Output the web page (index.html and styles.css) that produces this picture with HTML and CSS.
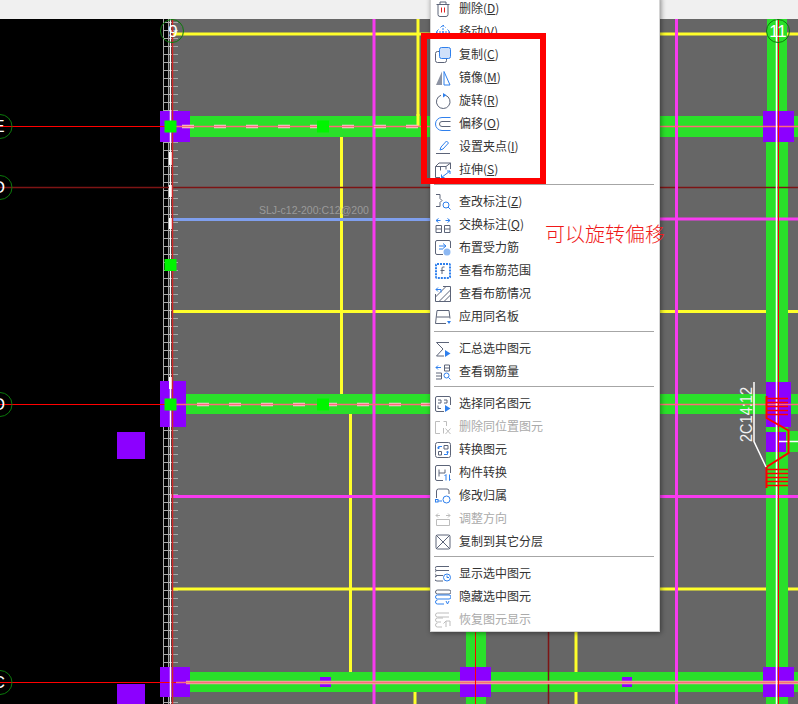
FILE: index.html
```html
<!DOCTYPE html>
<html lang="en">
<head>
    <meta charset="UTF-8">
    <meta name="viewport" content="width=device-width, initial-scale=1.0">
    <title>CAD</title>
    <link rel="stylesheet" href="styles.css">
</head>
<body>
<div class="page">
    <div class="topbar"></div>

    <!-- drawing area, coordinates are page pixels -->
    <svg class="cad" viewBox="0 19 798 685" width="798" height="685">
        <rect class="bg-gray" x="172" y="19" width="626" height="685"/>

        <!-- ruler -->
        <line class="tick" x1="170.5" y1="22" x2="170.5" y2="704"/>
        <line class="ruler" x1="163.5" y1="19" x2="163.5" y2="704"/>
        <line class="ruler" x1="168.5" y1="19" x2="168.5" y2="704"/>

        <!-- yellow -->
        <line class="yellow" x1="172" y1="34" x2="798" y2="34"/>
        <line class="yellow" x1="172" y1="311.5" x2="798" y2="311.5"/>
        <line class="yellow" x1="172" y1="589" x2="798" y2="589"/>
        <line class="yellow" x1="418" y1="19" x2="418" y2="120"/>
        <line class="yellow" x1="341.5" y1="128" x2="341.5" y2="404"/>
        <line class="yellow" x1="350.5" y1="405" x2="350.5" y2="681"/>
        <line class="yellow" x1="415" y1="684" x2="415" y2="704"/>
        <line class="yellow" x1="576" y1="630" x2="576" y2="704"/>

        <!-- green beams -->
        <rect class="green" x="186" y="116" width="612" height="21"/>
        <rect class="green" x="186" y="394" width="612" height="20"/>
        <rect class="green" x="186" y="672" width="612" height="20"/>
        <rect class="green" x="767" y="19" width="20" height="92"/>
        <rect class="green" x="766" y="142" width="22" height="562"/>
        <rect class="green" x="466" y="630" width="20" height="74"/>
        <rect class="green" x="789" y="431" width="9" height="21"/>
        <line class="yellow" x1="418" y1="114" x2="418" y2="126"/>
        <line class="yellow" x1="341.5" y1="404" x2="341.5" y2="405"/>

        <!-- dark red axis lines -->
        <line class="darkred" x1="0" y1="187.5" x2="798" y2="187.5"/>
        <line class="darkred" x1="548.5" y1="630" x2="548.5" y2="704"/>

        <!-- magenta -->
        <line class="blue" x1="170" y1="219.5" x2="430" y2="219.5"/>
        <line class="magenta" x1="660" y1="219" x2="798" y2="219"/>
        <line class="magenta" x1="170" y1="496.5" x2="798" y2="496.5"/>
        <line class="magenta" x1="374" y1="19" x2="374" y2="704"/>
        <line class="magenta" x1="676.5" y1="19" x2="676.5" y2="704"/>

        <!-- purple columns -->
        <rect class="purple" x="160" y="111" width="30" height="31"/>
        <rect class="purple" x="160" y="381" width="26" height="46"/>
        <rect class="purple" x="160" y="667" width="30" height="30"/>
        <rect class="purple" x="460" y="667" width="31" height="30"/>
        <rect class="purple" x="763" y="667" width="31" height="30"/>
        <rect class="purple" x="763" y="111" width="31" height="31"/>
        <rect class="purple" x="766" y="382" width="25" height="45"/>
        <rect class="purple" x="766" y="432" width="20" height="20"/>
        <rect class="purple" x="320" y="677" width="11" height="10"/>
        <rect class="purple" x="622" y="677" width="10" height="10"/>
        <rect class="purple" x="117" y="432" width="28" height="27"/>
        <rect class="purple" x="117" y="684" width="28" height="20"/>

        <!-- axis lines -->
        <line class="red" x1="0" y1="126.5" x2="190" y2="126.5"/>
        <line class="red" x1="0" y1="404.5" x2="186" y2="404.5"/>
        <line class="red" x1="0" y1="682.5" x2="190" y2="682.5"/>
        <line class="dash" x1="182" y1="126.5" x2="430" y2="126.5"/>
        <line class="dash" x1="197" y1="404.5" x2="430" y2="404.5"/>
        <line class="pale" x1="186" y1="682.5" x2="798" y2="682.5"/>
        <line class="pink" x1="176" y1="126.5" x2="798" y2="126.5"/>
        <line class="pink" x1="176" y1="404.5" x2="798" y2="404.5"/>
        <line class="pink" x1="176" y1="682.5" x2="798" y2="682.5"/>

        <line class="white" x1="170.5" y1="19" x2="170.5" y2="704"/>
        <line class="white-bold" x1="170.5" y1="152" x2="170.5" y2="165"/>
        <line class="white-bold" x1="170.5" y1="185" x2="170.5" y2="197"/>
        <line class="white-bold" x1="170.5" y1="218" x2="170.5" y2="229"/>
        <line class="white-bold" x1="170.5" y1="377" x2="170.5" y2="389"/>
        <line class="red-v" x1="172.5" y1="19" x2="172.5" y2="704"/>
        <line class="white" x1="776.5" y1="19" x2="776.5" y2="704"/>
        <line class="red" x1="778.5" y1="19" x2="778.5" y2="704"/>
        <line class="red" x1="475.5" y1="630" x2="475.5" y2="704"/>
        <line class="white-thin" x1="779" y1="441.5" x2="798" y2="441.5"/>

        <!-- grips -->
        <rect class="grip" x="164.500" y="120.500" width="12" height="12"/>
        <rect class="grip" x="317" y="120.500" width="12" height="12"/>
        <rect class="grip" x="164.500" y="259" width="12" height="12"/>
        <rect class="grip" x="164.500" y="398.500" width="12" height="12"/>
        <rect class="grip" x="317" y="398.500" width="12" height="12"/>

        <!-- axis bubbles -->
        <circle class="bubble" cx="172" cy="31" r="11.500"/>
        <circle class="bubble" cx="778" cy="31" r="11.500"/>
        <circle class="bubble" cx="0" cy="126.500" r="12"/>
        <circle class="bubble" cx="0" cy="187.500" r="12"/>
        <circle class="bubble" cx="0" cy="404.500" r="12"/>
        <circle class="bubble" cx="0" cy="682.500" r="12"/>
        <text class="axis-label" x="173" y="37">9</text>
        <text class="axis-label" x="778" y="37">11</text>
        <text class="axis-label" x="-1" y="132">E</text>
        <text class="axis-label" x="-1" y="193">D</text>
        <text class="axis-label" x="-1" y="410">D</text>
        <text class="axis-label" x="-1" y="688">C</text>

        <text class="rebar-label" x="259" y="214">SLJ-c12-200:C12@200</text>

        <!-- rebar mark on the right -->
        <g class="rebar">
            <path class="rebar-bend" d="M766.500 396V418L788.500 430.500V453L766.500 467V488"/>
            <path d="M766 398.500H788M766 402.500H788M766 406.500H788M766 410.500H788M766 414.500H788"/>
            <path d="M766 469.500H788M766 473.500H788M766 477.500H788M766 481.500H788M766 485.500H788"/>
        </g>
        <path class="leader" d="M754 382V441.500L766 467"/>
        <text class="mark-label" transform="translate(752 442) rotate(-90)" textLength="55" lengthAdjust="spacingAndGlyphs">2C14:12</text>
    </svg>

    <!-- right click menu -->
    <ul class="menu">
        <li class="item"><svg class="ico" viewBox="0 0 16 16"><path class="s-g" d="M1.500 3.500h13M5 3.500v-2.500h6v2.500M3 3.500v10a2 2 0 0 0 2 2h6a2 2 0 0 0 2-2v-10"/><path class="s-r" d="M6.500 6.500v5M9.500 6.500v5"/></svg><span>删除(<u>D</u>)</span></li>
        <li class="item"><svg class="ico" viewBox="0 0 16 16"><path class="s-b" d="M8 1v13M1 8h14M5.500 3.500L8 1l2.500 2.500M3.500 5.500L1 8l2.500 2.500M12.500 5.500L15 8l-2.500 2.500" stroke-dasharray="2 1"/></svg><span>移动(<u>V</u>)</span></li>
        <li class="item"><svg class="ico" viewBox="0 0 16 16"><rect class="s-g" x="0.500" y="4.500" width="11" height="11" rx="2"/><rect class="s-b f-b" x="4.500" y="0.500" width="11" height="11" rx="2"/></svg><span>复制(<u>C</u>)</span></li>
        <li class="item"><svg class="ico" viewBox="0 0 16 16"><path class="f-g" d="M7 1.500L1 15h6z"/><path class="s-b" d="M9 1.500L15 15H9z"/></svg><span>镜像(<u>M</u>)</span></li>
        <li class="item"><svg class="ico" viewBox="0 0 16 16"><path class="s-g" d="M6 2.300a6.800 6.800 0 1 0 4.500 0"/><path class="f-bs" d="M8 0l3.500 2.300L8 4.500z"/></svg><span>旋转(<u>R</u>)</span></li>
        <li class="item"><svg class="ico" viewBox="0 0 16 16"><path class="s-b" d="M15.500 1.500H7a6.500 6.500 0 0 0 0 13h8.500"/><path class="s-g" d="M15.500 5.500H7a2.500 2.500 0 0 0 0 5h8.500"/></svg><span>偏移(<u>O</u>)</span></li>
        <li class="item"><svg class="ico" viewBox="0 0 16 16"><path class="s-b" d="M5 11l1-3 5.500-6 2 2L8 10z"/><path class="s-g" d="M1 14.500h14"/></svg><span>设置夹点(<u>I</u>)</span></li>
        <li class="item"><svg class="ico" viewBox="0 0 16 16"><path class="s-g" d="M5 15.500H0.500V4.500L4 1h11.500v6M0.500 4.500H11v3M11 4.500L15.500 1M5.500 4.500v4"/><path class="s-b" d="M6.500 15.500l8.500-6.500M6.500 15.500h3M6.500 15.500v-3M15 9h-3M15 9v3"/></svg><span>拉伸(<u>S</u>)</span></li>
        <li class="sep"></li>
        <li class="item"><svg class="ico" viewBox="0 0 16 16"><path class="s-g" d="M1 0.500h4v4l2 2-2 2v4H1"/><circle class="s-b" cx="11" cy="11" r="3"/><path class="s-b" d="M13 13l2.500 2.500"/></svg><span>查改标注(<u>Z</u>)</span></li>
        <li class="item"><svg class="ico" viewBox="0 0 16 16"><path class="s-b" d="M1 3.500h4.500M3.500 1.500L1 3.500l2.500 2M15 3.500h-4.500M12.500 1.500l2.500 2-2.500 2"/><path class="s-g" d="M1 8.500h5.500v7H1zM9.500 8.500H15v7H9.500zM1 12h5.500M9.500 12H15"/></svg><span>交换标注(<u>Q</u>)</span></li>
        <li class="item"><svg class="ico" viewBox="0 0 16 16"><path class="s-g" d="M8 14.500H2a1.500 1.500 0 0 1-1.500-1.500V2A1.500 1.500 0 0 1 2 0.500h12A1.500 1.500 0 0 1 15.500 2v6"/><path class="s-b" d="M4 6h7M8 3.500L11 6 8 8.500M4 9h4"/><circle class="f-lb" cx="12" cy="12" r="3.500"/></svg><span>布置受力筋</span></li>
        <li class="item"><svg class="ico" viewBox="0 0 16 16"><rect class="s-b dotted" x="1" y="1" width="14" height="14" rx="1"/><path class="s-g" d="M9.500 4H8a1 1 0 0 0-1 1v6M5.500 7.500h4"/></svg><span>查看布筋范围</span></li>
        <li class="item"><svg class="ico" viewBox="0 0 16 16"><path class="s-g" d="M8 0.500h7.500v15H0.500V8M15.500 4L4 15.500M15.500 9L9 15.500M11 0.500L0.500 11"/><path class="s-b" d="M6 3.500H1M3 1.500L1 3.500l2 2M6 3.500v3"/></svg><span>查看布筋情况</span></li>
        <li class="item"><svg class="ico" viewBox="0 0 16 16"><path class="s-g" d="M11 14.500H0.500L2 1.500h12l1 8M1.500 8h13"/><path class="f-bs" d="M12 12h4l-2 3z"/></svg><span>应用同名板</span></li>
        <li class="sep"></li>
        <li class="item"><svg class="ico" viewBox="0 0 16 16"><path class="s-g" d="M14 1.500H1.500L8 8l-6.500 7H9"/><path class="f-bs" d="M10 9l5.500 3.500L10 16z"/></svg><span>汇总选中图元</span></li>
        <li class="item"><svg class="ico" viewBox="0 0 16 16"><path class="s-b" d="M1 3.500h5M3 1.500L1 3.500l2 2"/><path class="s-g" d="M9.500 1h5v6h-5zM9.500 4h5M1 9h5.500v6H1M1 12h5.500"/><circle class="s-b" cx="11.500" cy="11.500" r="2.500"/><path class="s-b" d="M13.500 13.500l2 2"/></svg><span>查看钢筋量</span></li>
        <li class="sep"></li>
        <li class="item"><svg class="ico" viewBox="0 0 16 16"><path class="s-g" d="M9 15.500H2A1.500 1.500 0 0 1 0.500 14V2A1.500 1.500 0 0 1 2 0.500h12A1.500 1.500 0 0 1 15.500 2v7M3 4h3v3H3M9 4h3v3H9M3 9.500v3h3"/><path class="f-bs" d="M10 9l5.500 3.500L10 16z"/></svg><span>选择同名图元</span></li>
        <li class="item off"><svg class="ico" viewBox="0 0 16 16"><path class="s-d" d="M5 2.500H0.500v12H5M8.500 2.500h3v4.500M8.500 9v5.500"/><path class="s-d" d="M10.500 9.500l5 5.500M15.500 9.500l-5 5.500"/></svg><span>删除同位置图元</span></li>
        <li class="item"><svg class="ico" viewBox="0 0 16 16"><rect class="s-g" x="0.500" y="0.500" width="15" height="15" rx="2"/><path class="s-g" d="M9 3.500h4v3.500H9zM3.500 9.500h3v3.500h-3z"/><path class="s-b" d="M7 4.500H3.500v2.500M2.500 5.500l1 1.500 1-1.500M9 12.500h3.500V9.500M11.500 10.500l1-1.500 1 1.500"/></svg><span>转换图元</span></li>
        <li class="item"><svg class="ico" viewBox="0 0 16 16"><path class="s-g" d="M8 15.500H2A1.500 1.500 0 0 1 0.500 14V2A1.500 1.500 0 0 1 2 0.500h12A1.500 1.500 0 0 1 15.500 2v6M4 4.500v7M4 8h6M10 4.500V8"/><path class="s-b" d="M11 9.500v6M9.500 11l1.500-1.500M14.500 9.500v6l1-1.500"/></svg><span>构件转换</span></li>
        <li class="item"><svg class="ico" viewBox="0 0 16 16"><path class="s-g" d="M1.500 10V3a2 2 0 0 1 2-2h8.500a2 2 0 0 1 2 2v3"/><circle class="s-b" cx="11.500" cy="11.500" r="3.500"/><rect class="s-b" x="0.500" y="11.500" width="2.500" height="2.500"/><path class="s-b" d="M3 13h4"/></svg><span>修改归属</span></li>
        <li class="item off"><svg class="ico" viewBox="0 0 16 16"><path class="s-d" d="M1 4.500h4M3 2.500L1 4.500l2 2M15 4.500h-4M13 2.500l2 2-2 2M1.500 8.500h13v6h-13z"/></svg><span>调整方向</span></li>
        <li class="item"><svg class="ico" viewBox="0 0 16 16"><rect class="s-g" x="1" y="1" width="14" height="14" rx="1.500"/><path class="s-g" d="M1 1l14 14M15 1L1 15"/></svg><span>复制到其它分层</span></li>
        <li class="sep"></li>
        <li class="item"><svg class="ico" viewBox="0 0 16 16"><path class="s-g" d="M14 0.500H2a2 2 0 0 0 0 4h12M14 4.500H2a2 2 0 0 0 0 5h6M8 15H2a2 2 0 0 1 0-5"/><circle class="s-b" cx="12" cy="11.500" r="3.500"/><path class="s-b" d="M12 9.500v2h2"/></svg><span>显示选中图元</span></li>
        <li class="item"><svg class="ico" viewBox="0 0 16 16"><path class="s-g" d="M14 1H2.500a2 2 0 0 0 0 4H14a2 2 0 0 0 0-4"/><path class="s-b" d="M14 6H2.500a2 2 0 0 0 0 4H14a2 2 0 0 0 0-4M9 15H2.500a2 2 0 0 1 0-4M11 12l1.500 3 1.500-3"/></svg><span>隐藏选中图元</span></li>
        <li class="item off"><svg class="ico" viewBox="0 0 16 16"><path class="s-d" d="M14 1H2.500a2 2 0 0 0 0 4H14M8 6H2.500a2 2 0 0 0 0 4H6M7 15H2.500a2 2 0 0 1 0-4M11 15v-6M11 9l-2.500 2.500M11 9h4v5"/></svg><span>恢复图元显示</span></li>
    </ul>

    <!-- annotation drawn on top of the screenshot -->
    <div class="mark-box"></div>
    <div class="note">可以旋转偏移</div>
</div>
</body>
</html>
```

FILE: styles.css
```css
body {
    margin: 0;
    background-color: #000;
}
.page {
    position: relative;
    width: 798px;
    height: 704px;
    overflow: hidden;
    background-color: #000;
}
.topbar {
    height: 19px;
    background-color: #f0f0f0;
}
.cad {
    display: block;
}

/* drawing */
.bg-gray { fill: #666; }
.green { fill: #2ae02a; }
.purple { fill: #8c00ff; }
.grip { fill: #00f500; }
.tick { stroke: #a8a8a8; stroke-width: 15; stroke-dasharray: 1 7; }
.ruler { stroke: #a8a8a8; stroke-width: 1; }
.yellow { stroke: #ffff2a; stroke-width: 3; }
.magenta { stroke: #f83af0; stroke-width: 3; }
.blue { stroke: #7f9fee; stroke-width: 3; }
.darkred { stroke: #7d1414; stroke-width: 1.5; }
.red { stroke: #f00; stroke-width: 1; }
.red-v { stroke: #d02828; stroke-width: 1.5; }
.pink { stroke: #ff6a78; stroke-width: 1.5; }
.pale { stroke: #e8b0a0; stroke-width: 3.5; }
.dash { stroke: #f4d0d0; stroke-width: 3.5; stroke-dasharray: 12 20; }
.white { stroke: #fff; stroke-width: 1.5; }
.white-bold { stroke: #fff; stroke-width: 3; }
.white-thin { stroke: #fff; stroke-width: 1.5; }
.bubble { fill: none; stroke: #0b7a0b; stroke-width: 1; }
.axis-label {
    fill: #fff;
    font-family: "Liberation Sans", sans-serif;
    font-size: 17px;
    text-anchor: middle;
}
.rebar-label {
    fill: #9a9a9a;
    font-family: "Liberation Sans", sans-serif;
    font-size: 10.5px;
}
.rebar path { fill: none; stroke: #f00; stroke-width: 1.5; }
.rebar .rebar-bend { stroke-width: 2; }
.leader { fill: none; stroke: #fff; stroke-width: 1.5; }
.mark-label {
    fill: #f2f2f2;
    font-family: "Liberation Sans", sans-serif;
    font-size: 16px;
}

/* context menu */
.menu {
    position: absolute;
    top: -4px;
    left: 430px;
    width: 228px;
    margin: 0;
    padding: 0;
    list-style: none;
    background-color: #fff;
    border: 1px solid #d4d4d4;
    box-shadow: 1px 1px 5px rgba(0, 0, 0, 0.45);
    font-family: "Noto Sans CJK SC", "Liberation Sans", sans-serif;
    font-size: 12px;
    color: #333;
}
.item {
    display: flex;
    align-items: center;
    gap: 8px;
    height: 23px;
    padding-left: 4px;
}
.item span {
    margin-bottom: 2px;
}
.item u {
    text-underline-offset: 1px;
}
.off {
    color: #aaa;
}
.sep {
    height: 1px;
    margin: 3px 5px 5px 3px;
    background-color: #a6a6a6;
}
.ico {
    flex: none;
    width: 16px;
    height: 16px;
}
.s-g { fill: none; stroke: #5c6478; stroke-width: 1; }
.s-b { fill: none; stroke: #2f80ed; stroke-width: 1; }
.s-r { fill: none; stroke: #e02020; stroke-width: 1; }
.s-d { fill: none; stroke: #bdbdbd; stroke-width: 1; }
.f-b { fill: #cfe0fa; }
.f-g { fill: #8d93a3; }
.f-bs { fill: #2f80ed; }
.f-lb { fill: #8db8f2; }
.dotted { stroke-width: 2; stroke-dasharray: 2 1; }

/* markup over the screenshot */
.mark-box {
    position: absolute;
    top: 33px;
    left: 421px;
    width: 113px;
    height: 139px;
    border: 6px solid #f00;
}
.note {
    position: absolute;
    top: 220px;
    left: 545px;
    font-family: "Noto Sans CJK SC", sans-serif;
    font-weight: 300;
    font-size: 20px;
    line-height: 28px;
    color: #f01818;
}
```
